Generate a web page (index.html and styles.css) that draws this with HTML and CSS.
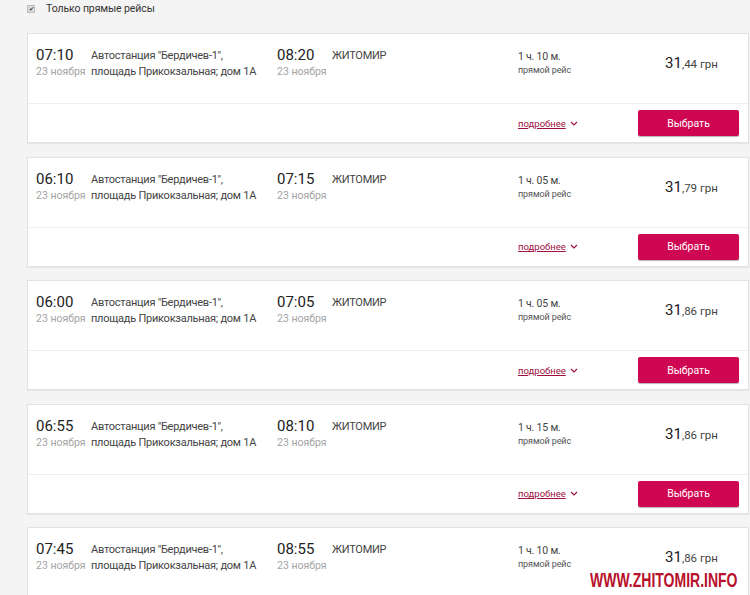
FILE: index.html
```html
<!DOCTYPE html>
<html lang="ru">
<head>
<meta charset="utf-8">
<title>Рейсы</title>
<link rel="stylesheet" href="styles.css">
</head>
<body>
<div class="page">
  <label class="filter"><span class="check">✔</span>Только прямые рейсы</label>

  <div class="card">
    <div class="main">
      <div class="col time"><div class="t">07:10</div><div class="d">23 ноября</div></div>
      <div class="col addr">Автостанция "Бердичев-1",<br>площадь Прикокзальная; дом 1А</div>
      <div class="col time"><div class="t">08:20</div><div class="d">23 ноября</div></div>
      <div class="col dest">ЖИТОМИР</div>
      <div class="col dur"><div class="dt">1 ч. 10 м.</div><div class="dr">прямой рейс</div></div>
      <div class="col price"><span class="big">31</span>,44 грн</div>
    </div>
    <div class="foot"><a class="more" href="#">подробнее</a><span class="chev"><svg width="8" height="5" viewBox="0 0 8 5"><path d="M1 1l3 3 3-3" fill="none" stroke="#a0103e" stroke-width="1.2"/></svg></span><button class="btn">Выбрать</button></div>
  </div>

  <div class="card">
    <div class="main">
      <div class="col time"><div class="t">06:10</div><div class="d">23 ноября</div></div>
      <div class="col addr">Автостанция "Бердичев-1",<br>площадь Прикокзальная; дом 1А</div>
      <div class="col time"><div class="t">07:15</div><div class="d">23 ноября</div></div>
      <div class="col dest">ЖИТОМИР</div>
      <div class="col dur"><div class="dt">1 ч. 05 м.</div><div class="dr">прямой рейс</div></div>
      <div class="col price"><span class="big">31</span>,79 грн</div>
    </div>
    <div class="foot"><a class="more" href="#">подробнее</a><span class="chev"><svg width="8" height="5" viewBox="0 0 8 5"><path d="M1 1l3 3 3-3" fill="none" stroke="#a0103e" stroke-width="1.2"/></svg></span><button class="btn">Выбрать</button></div>
  </div>

  <div class="card">
    <div class="main">
      <div class="col time"><div class="t">06:00</div><div class="d">23 ноября</div></div>
      <div class="col addr">Автостанция "Бердичев-1",<br>площадь Прикокзальная; дом 1А</div>
      <div class="col time"><div class="t">07:05</div><div class="d">23 ноября</div></div>
      <div class="col dest">ЖИТОМИР</div>
      <div class="col dur"><div class="dt">1 ч. 05 м.</div><div class="dr">прямой рейс</div></div>
      <div class="col price"><span class="big">31</span>,86 грн</div>
    </div>
    <div class="foot"><a class="more" href="#">подробнее</a><span class="chev"><svg width="8" height="5" viewBox="0 0 8 5"><path d="M1 1l3 3 3-3" fill="none" stroke="#a0103e" stroke-width="1.2"/></svg></span><button class="btn">Выбрать</button></div>
  </div>

  <div class="card">
    <div class="main">
      <div class="col time"><div class="t">06:55</div><div class="d">23 ноября</div></div>
      <div class="col addr">Автостанция "Бердичев-1",<br>площадь Прикокзальная; дом 1А</div>
      <div class="col time"><div class="t">08:10</div><div class="d">23 ноября</div></div>
      <div class="col dest">ЖИТОМИР</div>
      <div class="col dur"><div class="dt">1 ч. 15 м.</div><div class="dr">прямой рейс</div></div>
      <div class="col price"><span class="big">31</span>,86 грн</div>
    </div>
    <div class="foot"><a class="more" href="#">подробнее</a><span class="chev"><svg width="8" height="5" viewBox="0 0 8 5"><path d="M1 1l3 3 3-3" fill="none" stroke="#a0103e" stroke-width="1.2"/></svg></span><button class="btn">Выбрать</button></div>
  </div>

  <div class="card">
    <div class="main">
      <div class="col time"><div class="t">07:45</div><div class="d">23 ноября</div></div>
      <div class="col addr">Автостанция "Бердичев-1",<br>площадь Прикокзальная; дом 1А</div>
      <div class="col time"><div class="t">08:55</div><div class="d">23 ноября</div></div>
      <div class="col dest">ЖИТОМИР</div>
      <div class="col dur"><div class="dt">1 ч. 10 м.</div><div class="dr">прямой рейс</div></div>
      <div class="col price"><span class="big">31</span>,86 грн</div>
    </div>
  </div>
</div>
<div class="watermark">WWW.ZHITOMIR.INFO</div>
</body>
</html>
```

FILE: styles.css
```css
html, body {
  margin: 0;
  padding: 0;
  background: #f4f4f4;
  font-family: Roboto, "Liberation Sans", sans-serif;
  color: #333;
  overflow: hidden;
  height: 595px;
}
.page {
  padding: 0 1px 0 27px;
}
.filter {
  display: flex;
  align-items: center;
  height: 17px;
  font-size: 10.5px;
  letter-spacing: -0.1px;
  color: #333;
  margin-bottom: 16px;
}
.check {
  display: inline-flex;
  align-items: center;
  justify-content: center;
  width: 6px;
  height: 6px;
  background: #ddd;
  border: 1px solid #bbb;
  font-size: 6px;
  line-height: 6px;
  color: #333;
  margin-right: 11px;
}
.card {
  background: #fff;
  border: 1px solid #e2e2e2;
  box-shadow: 0 1px 1px rgba(0,0,0,0.05);
  margin-bottom: 13.6px;
  height: 108px;
}
.main {
  display: flex;
  height: 70px;
  padding: 12px 0 0 8px;
  box-sizing: border-box;
  border-bottom: 1px solid #f0f0f0;
}
.col { flex: none; }
.time { width: 55px; white-space: nowrap; }
.t {
  font-size: 15px;
  font-weight: 400;
  line-height: 19px;
  color: #222;
}
.d {
  font-size: 10.5px;
  color: #a4a4a4;
  line-height: 14px;
  white-space: nowrap;
}
.addr, .dest {
  width: 186px;
  font-size: 11px;
  letter-spacing: -0.25px;
  line-height: 16px;
  color: #444;
  padding-top: 2px;
}
.dur { width: 147px; padding-top: 3px; }
.dt { font-size: 10.5px; line-height: 15px; color: #444; letter-spacing: -0.2px; }
.dr { font-size: 9px; line-height: 13px; color: #555; letter-spacing: -0.1px; }
.price {
  font-size: 11.5px;
  color: #444;
  padding-top: 8px;
}
.big { font-size: 15px; font-weight: 400; color: #1a1a1a; }
.foot {
  display: flex;
  align-items: center;
  height: 38px;
  padding-left: 490px;
}
.more {
  font-size: 9.5px;
  color: #a0103e;
  text-decoration: underline;
}
.chev { margin-left: 4px; display: inline-flex; }
.btn {
  margin-left: auto;
  margin-right: 9px;
  width: 101px;
  height: 26px;
  background: #cf0651;
  border: none;
  border-radius: 2px;
  box-shadow: 0 1px 1px rgba(0,0,0,0.3);
  color: #fff;
  font-family: Roboto, "Liberation Sans", sans-serif;
  font-size: 10.5px;
  padding: 0;
}
.watermark {
  position: absolute;
  left: 590px;
  top: 569px;
  font-family: "Liberation Sans", sans-serif;
  font-weight: bold;
  font-size: 20px;
  color: #b8112b;
  transform: scaleX(0.70);
  transform-origin: left top;
}
```
